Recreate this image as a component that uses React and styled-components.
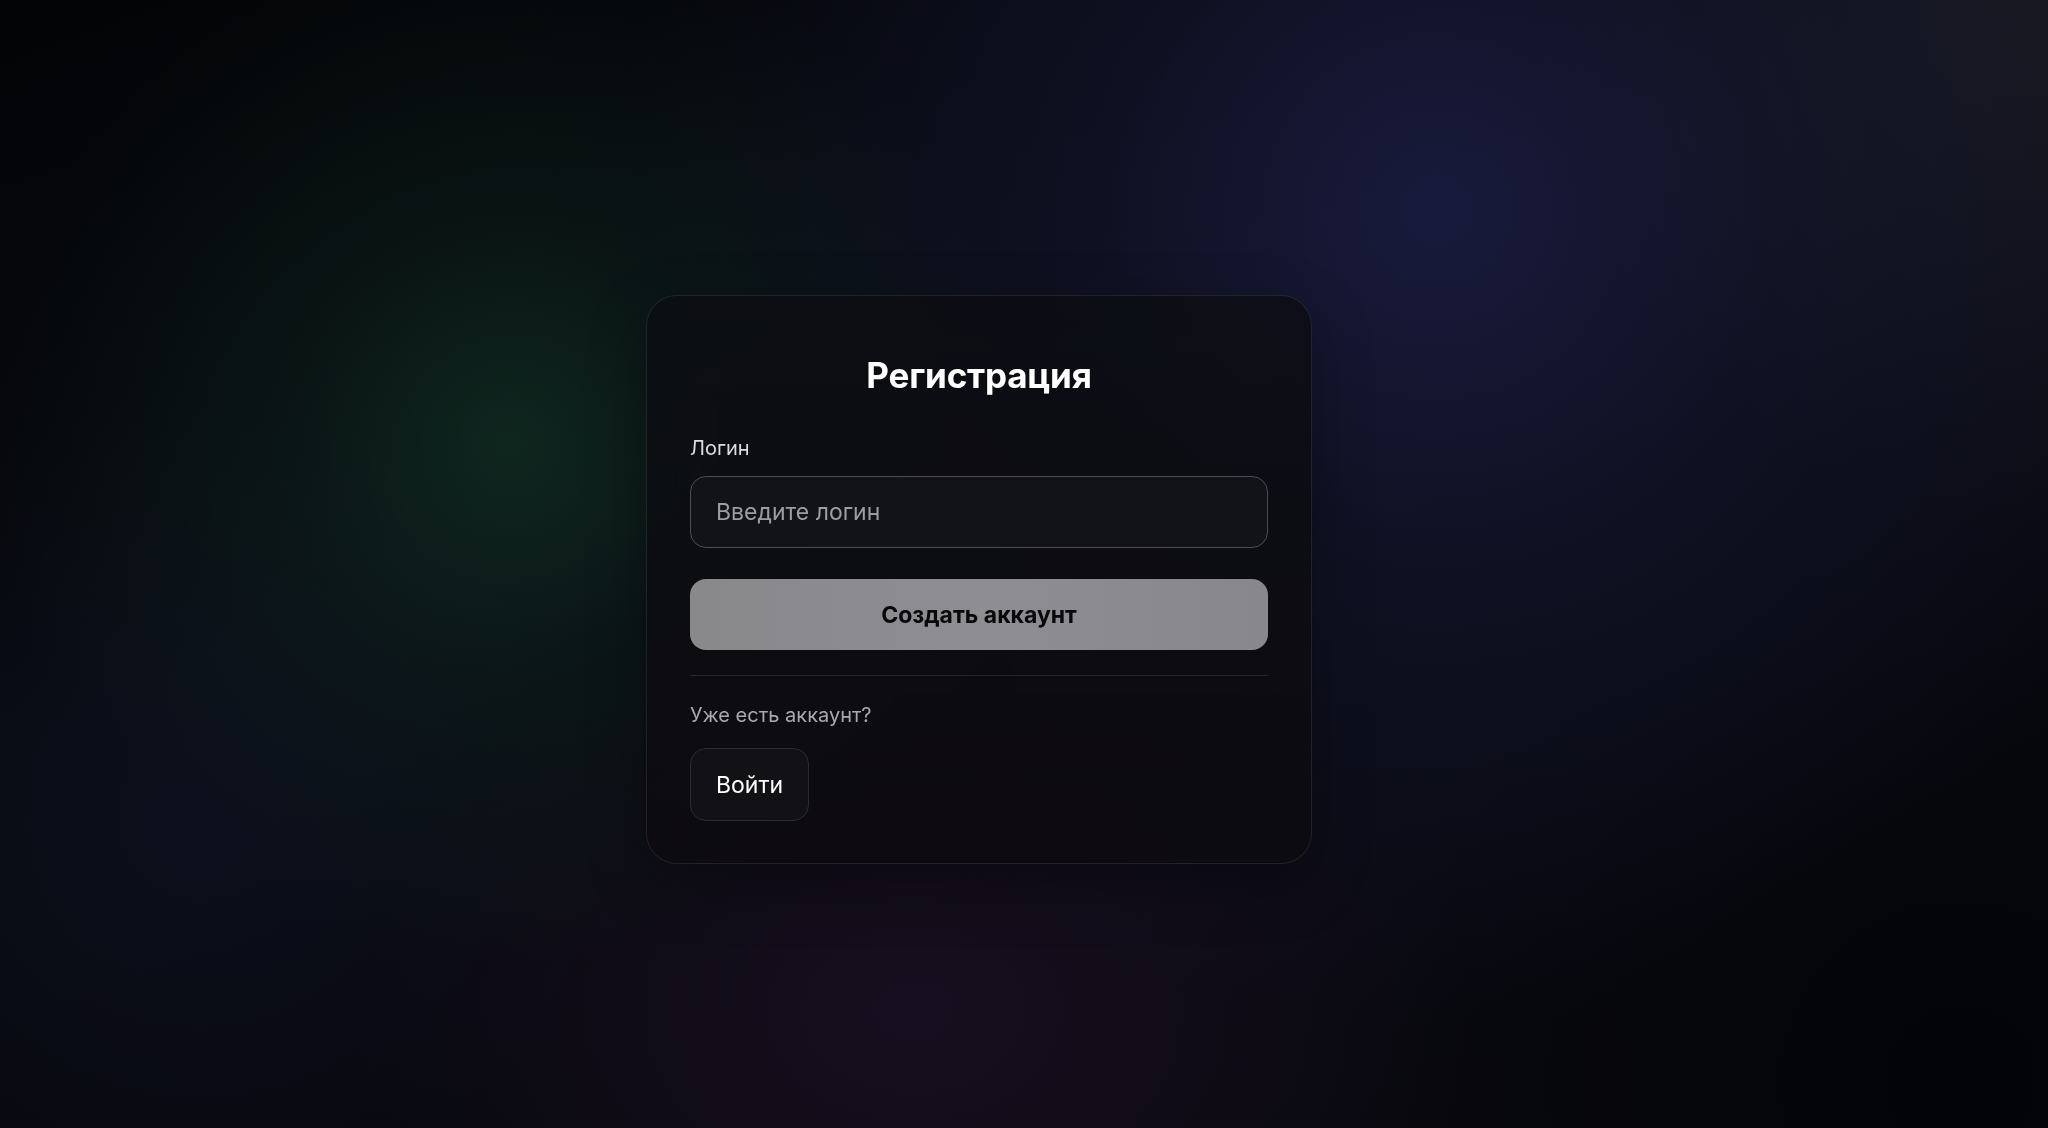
import React, { useState } from 'react';
import styled, { createGlobalStyle } from 'styled-components';

const GlobalStyle = createGlobalStyle`
  * {
    box-sizing: border-box;
  }
  html, body {
    margin: 0;
    padding: 0;
    background: #06070b;
  }
  body {
    font-family: Inter, "Noto Sans", "Liberation Sans", sans-serif;
    -webkit-font-smoothing: antialiased;
  }
`;

// Page with the coloured glows behind the card
const Page = styled.div`
  min-height: 100vh;
  display: flex;
  align-items: center;
  justify-content: center;
  padding: 31px 90px 0 0;
  background:
    radial-gradient(circle at 510px 444px, rgba(20, 58, 42, 0.6) 0, rgba(20, 58, 42, 0.25) 220px, rgba(20, 58, 42, 0) 520px),
    radial-gradient(circle at 1437px 209px, rgba(30, 32, 76, 0.75) 0, rgba(26, 28, 62, 0.45) 320px, rgba(26, 28, 62, 0) 820px),
    radial-gradient(ellipse 560px 420px at 914px 1010px, rgba(32, 18, 40, 0.65) 0, rgba(32, 18, 40, 0) 100%),
    radial-gradient(circle at 2048px 0px, rgba(30, 30, 34, 0.7) 0, rgba(30, 30, 34, 0) 520px),
    radial-gradient(circle at 200px 820px, rgba(16, 18, 38, 0.55) 0, rgba(16, 18, 38, 0) 420px),
    radial-gradient(circle at 1960px 1080px, rgba(2, 3, 6, 0.8) 0, rgba(2, 3, 6, 0) 600px),
    linear-gradient(160deg, #030406 0%, #080a10 40%, #08080e 100%);
`;

const Card = styled.div`
  width: 666px;
  padding: 58px 43px 42px;
  border-radius: 31px;
  border: 1px solid rgba(255, 255, 255, 0.09);
  background: linear-gradient(180deg, rgba(12, 13, 18, 0.82) 0%, rgba(13, 11, 16, 0.88) 100%);
  backdrop-filter: blur(20px);
  box-shadow: 0 20px 60px rgba(0, 0, 0, 0.3);
  display: flex;
  flex-direction: column;
`;

const Title = styled.h1`
  margin: 0 0 39px;
  text-align: center;
  color: #ffffff;
  font-size: 35px;
  font-weight: 700;
  line-height: 42px;
  letter-spacing: -0.2px;
`;

const Label = styled.label`
  color: #dcdce2;
  font-size: 20px;
  line-height: 26px;
  margin-bottom: 15px;
`;

const Input = styled.input`
  width: 100%;
  height: 72px;
  padding: 0 25px;
  border-radius: 16px;
  border: 1px solid #4b4d56;
  background: rgba(20, 21, 26, 0.85);
  color: #ffffff;
  font-family: inherit;
  font-size: 23px;
  outline: none;

  &::placeholder {
    color: #9b9da4;
  }
`;

const PrimaryButton = styled.button`
  margin-top: 31px;
  width: 100%;
  height: 71px;
  border: none;
  border-radius: 16px;
  background: linear-gradient(90deg, #89898c 0%, #8e8d92 50%, #88878d 100%);
  color: #08080a;
  font-family: inherit;
  font-size: 23px;
  font-weight: 700;
  cursor: pointer;
`;

const Divider = styled.hr`
  margin: 25px 0 0;
  border: none;
  height: 1px;
  background: #26272d;
`;

const Hint = styled.p`
  margin: 25px 0 0;
  color: #a9a9b0;
  font-size: 20px;
  line-height: 28px;
`;

const SecondaryButton = styled.button`
  align-self: flex-start;
  margin-top: 19px;
  height: 73px;
  padding: 0 25px;
  border-radius: 16px;
  border: 1px solid #2b2c32;
  background: rgba(20, 20, 25, 0.8);
  color: #ffffff;
  font-family: inherit;
  font-size: 23px;
  cursor: pointer;
`;

const App = () => {
  const [login, setLogin] = useState('');

  return (
    <>
      <GlobalStyle />
      <Page>
        <Card>
          <Title>Регистрация</Title>
          <Label htmlFor="login">Логин</Label>
          <Input
            id="login"
            type="text"
            value={login}
            onChange={(e) => setLogin(e.target.value)}
            placeholder="Введите логин"
          />
          <PrimaryButton type="button">Создать аккаунт</PrimaryButton>
          <Divider />
          <Hint>Уже есть аккаунт?</Hint>
          <SecondaryButton type="button">Войти</SecondaryButton>
        </Card>
      </Page>
    </>
  );
};

export default App;
